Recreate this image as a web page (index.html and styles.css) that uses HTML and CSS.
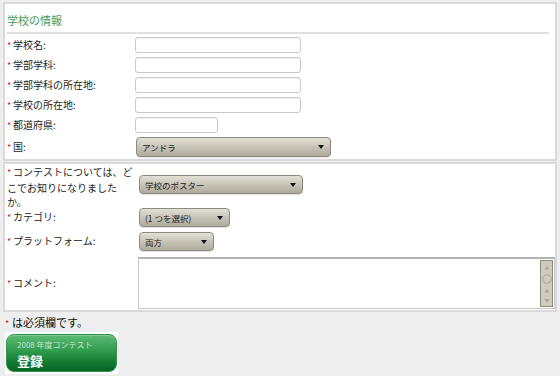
FILE: index.html
```html
<!DOCTYPE html>
<html lang="ja">
<head>
<meta charset="utf-8">
<link rel="stylesheet" href="styles.css">
</head>
<body>
<div class="page">
  <div class="panel panel-school">
    <h2 class="heading">学校の情報</h2>
    <div class="rule"></div>
    <div class="row"><label class="lbl required">学校名:</label><input class="field" type="text"></div>
    <div class="row"><label class="lbl required">学部学科:</label><input class="field" type="text"></div>
    <div class="row"><label class="lbl required">学部学科の所在地:</label><input class="field" type="text"></div>
    <div class="row"><label class="lbl required">学校の所在地:</label><input class="field" type="text"></div>
    <div class="row"><label class="lbl required">都道府県:</label><input class="field field-short" type="text"></div>
    <div class="row row-select"><label class="lbl required">国:</label>
      <div class="select select-country"><span>アンドラ</span><svg class="arrow" width="6" height="4" viewBox="0 0 6 4"><path d="M0 0H6L3 4Z" fill="#111"/></svg></div>
    </div>
  </div>
  <div class="panel panel-extra">
    <div class="row2 row-q"><label class="lbl lbl-q required">コンテストについては、どこでお知りになりましたか。</label>
      <div class="select select-source"><span>学校のポスター</span><svg class="arrow" width="6" height="4" viewBox="0 0 6 4"><path d="M0 0H6L3 4Z" fill="#111"/></svg></div>
    </div>
    <div class="row2 row-cat"><label class="lbl required">カテゴリ:</label>
      <div class="select select-cat"><span>(1 つを選択)</span><svg class="arrow" width="6" height="4" viewBox="0 0 6 4"><path d="M0 0H6L3 4Z" fill="#111"/></svg></div>
    </div>
    <div class="row2 row-plat"><label class="lbl required">プラットフォーム:</label>
      <div class="select select-plat"><span>両方</span><svg class="arrow" width="6" height="4" viewBox="0 0 6 4"><path d="M0 0H6L3 4Z" fill="#111"/></svg></div>
    </div>
    <div class="row2 row-comment"><label class="lbl required">コメント:</label>
      <div class="textarea-wrap">
        <textarea class="textarea"></textarea>
        <div class="scrollbar">
          <svg width="10" height="46" viewBox="0 0 10 46">
            <path d="M2.5 8.5L5 5L7.5 8.5Z" fill="#a9a699"/>
            <circle cx="5" cy="18" r="4.3" fill="none" stroke="#a9a699" stroke-width="1"/>
            <path d="M2.5 31.5L5 28L7.5 31.5Z" fill="#a9a699"/>
            <path d="M2.5 38L7.5 38L5 41.5Z" fill="#a9a699"/>
          </svg>
        </div>
      </div>
    </div>
  </div>
  <p class="note"><span class="req">*</span>は必須欄です。</p>
  <div class="btn-wrap">
    <button class="btn" type="button"><span class="btn-sub">2008 年度コンテスト</span><span class="btn-main">登録</span></button>
  </div>
</div>
</body>
</html>
```

FILE: styles.css
```css
html, body {
  margin: 0;
  padding: 0;
}
body {
  background: #eeeeee;
  font-family: "Noto Sans CJK JP", "DejaVu Sans", sans-serif;
  font-size: 10px;
  color: #222;
}
.page {
  padding: 2px 3px 0 3px;
}
.panel {
  background: #fff;
  border: 2px solid #dadada;
}
.panel-extra {
  margin-top: 1px;
}
.heading {
  margin: 0;
  padding: 9px 0 0 2px;
  font-size: 11px;
  line-height: 14px;
  font-weight: normal;
  color: #3f9c58;
}
.rule {
  height: 2px;
  background: #e0e0e0;
  margin: 5px 6px 1px 2px;
}
.row {
  display: grid;
  grid-template-columns: 128px auto;
  align-items: center;
  justify-content: start;
  height: 20px;
  padding-left: 2px;
}
.row-select {
  height: 24px;
}
.lbl {
  font-size: 10px;
  line-height: 14px;
  color: #1c1c1c;
}
.required::before,
.req {
  display: inline-block;
  width: 6px;
  color: #e0202a;
  font-size: 9px;
}
.required::before {
  content: "*";
}
.field {
  box-sizing: border-box;
  width: 166px;
  height: 16px;
  margin: 0;
  padding: 0 3px;
  border: 1px solid #c9c9c9;
  border-radius: 3px;
  background: #fff;
  box-shadow: inset 0 1px 1px rgba(0,0,0,0.06);
  font: inherit;
}
.field-short {
  width: 83px;
}
.select {
  box-sizing: border-box;
  display: flex;
  align-items: center;
  justify-content: space-between;
  height: 20px;
  padding: 0 6px 0 5px;
  border: 1px solid #8d8a7f;
  border-radius: 4px;
  background: linear-gradient(#e2dfd6, #c5c1b4 55%, #aeaa9c);
  box-shadow: 0 1px 1px rgba(0,0,0,0.12);
  font-size: 8.5px;
  line-height: 12px;
  color: #1e1e1e;
}
.arrow {
  display: block;
  flex: none;
}
.select-country {
  width: 195px;
  margin-left: 1px;
}
.row2 {
  display: grid;
  grid-template-columns: 128px 1fr;
  padding-left: 2px;
}
.row-q {
  align-items: start;
  padding-top: 1px;
  height: 42px;
  box-sizing: border-box;
}
.lbl-q {
  display: block;
  line-height: 14.5px;
}
.select-source {
  width: 164px;
  height: 19px;
  margin: 10px 0 0 4px;
}
.row-cat {
  align-items: center;
  height: 23px;
}
.select-cat {
  width: 91px;
  height: 19px;
  margin-left: 4px;
}
.row-plat {
  align-items: center;
  height: 25px;
}
.select-plat {
  width: 75px;
  height: 19px;
  margin-left: 4px;
}
.row-comment {
  align-items: center;
  padding-top: 3px;
  padding-bottom: 1px;
}
.textarea-wrap {
  box-sizing: border-box;
  display: flex;
  height: 52px;
  margin-left: 3px;
  border: 1px solid #c8c8c8;
  border-top: 2px solid #b4b4b4;
  background: #fff;
}
.textarea {
  flex: 1;
  border: 0;
  margin: 0;
  padding: 2px;
  resize: none;
  outline: none;
  overflow: hidden;
  font: inherit;
}
.scrollbar {
  box-sizing: border-box;
  width: 13px;
  margin: 1px 1px 1px 0;
  border: 1px solid #8e8b7f;
  background: #cfccbf;
  display: flex;
  justify-content: center;
}
.scrollbar svg {
  display: block;
}
.note {
  margin: 3px 0 0 0;
  padding-left: 2px;
  font-size: 11px;
  line-height: 14px;
  color: #111;
}
.note .req {
  width: 7px;
}
.btn-wrap {
  display: inline-block;
  margin: 1px 0 0 2px;
  padding: 2px 1px;
  background: #fff;
}
.btn {
  box-sizing: border-box;
  display: flex;
  flex-direction: column;
  align-items: flex-start;
  width: 111px;
  height: 38px;
  margin: 0;
  padding: 4px 0 0 10px;
  border: 1px solid #2f9448;
  border-radius: 8px;
  background: linear-gradient(#5dbb76, #2f9a4c 45%, #137a31 75%, #0a6426);
  box-shadow: inset 0 1px 0 rgba(255,255,255,0.25);
  font-family: inherit;
  cursor: pointer;
}
.btn-sub {
  font-size: 8px;
  line-height: 12px;
  color: #c3e6ca;
}
.btn-main {
  font-size: 13px;
  line-height: 19px;
  font-weight: bold;
  color: #fff;
}
```
